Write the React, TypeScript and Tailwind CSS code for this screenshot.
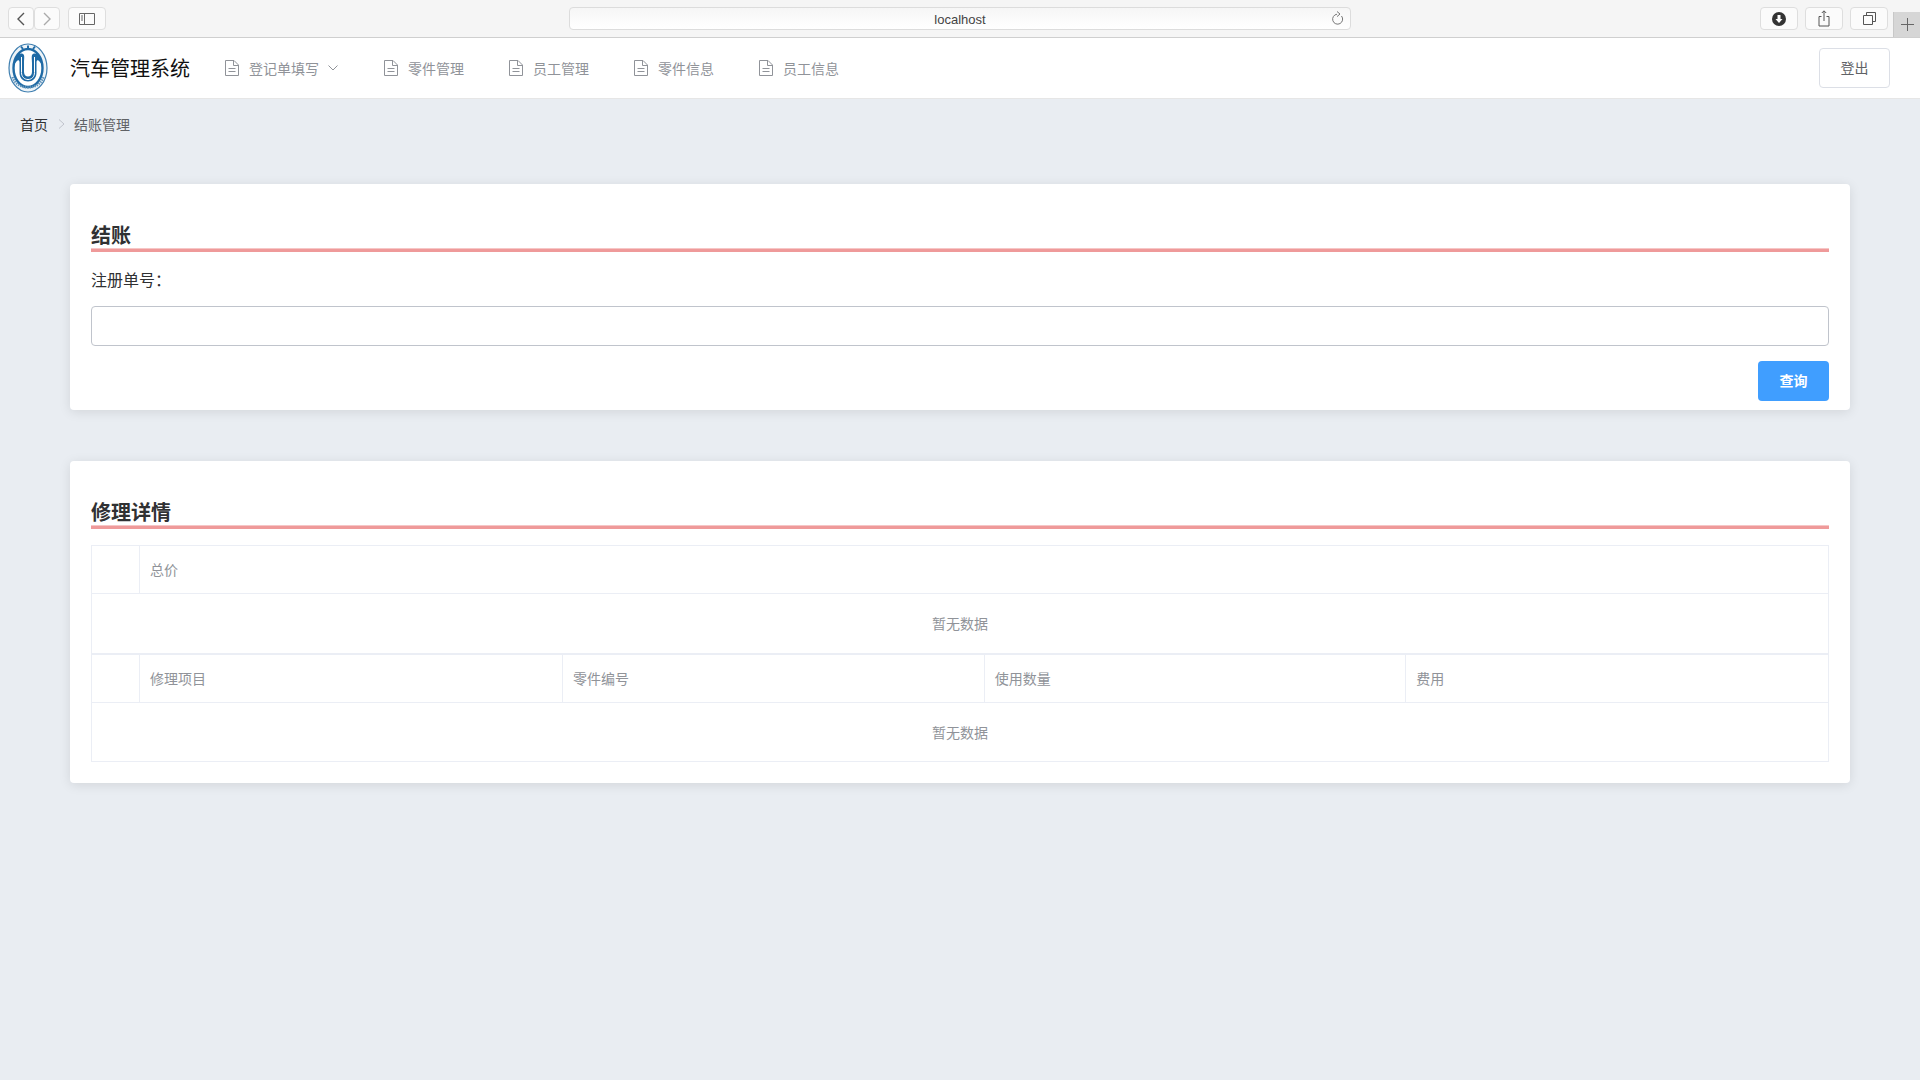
const font = { fontFamily: '"Noto Sans CJK SC", sans-serif' };

function DocIcon() {
  return (
    <svg className="w-[14px] h-[16px] shrink-0 text-[#909399]" viewBox="0 0 14 16" fill="none" stroke="currentColor" strokeWidth="1">
      <path d="M.5.5H9L13.5 5V15.5H.5Z" strokeLinejoin="round" />
      <path d="M8.5.5V5.5H13.5" />
      <path d="M3.5 8.5H10.5M3.5 11.5H10.5" />
    </svg>
  );
}

function ToolButton({ className, children }: { className: string; children?: React.ReactNode }) {
  return (
    <div className={`h-[23px] flex items-center justify-center rounded-[4px] border border-[#dedede] bg-[#fbfbfb] ${className}`}>
      {children}
    </div>
  );
}

function Toolbar() {
  return (
    <div className="h-[38px] shrink-0 flex bg-[#f5f5f5] border-b border-[#cfcfcf] pl-[8px]">
      <div className="flex pt-[7px]">
        <ToolButton className="w-[26px]">
          <svg width="12" height="14" viewBox="0 0 12 14" fill="none" stroke="#555" strokeWidth="1.4"><path d="M9 1L3 7L9 13" /></svg>
        </ToolButton>
        <ToolButton className="w-[26px]">
          <svg width="12" height="14" viewBox="0 0 12 14" fill="none" stroke="#aaa" strokeWidth="1.4"><path d="M3 1L9 7L3 13" /></svg>
        </ToolButton>
        <ToolButton className="w-[38px] ml-[8px]">
          <svg width="16" height="12" viewBox="0 0 16 12" fill="none" stroke="#666"><path d="M.5.5H15.5V11.5H.5ZM5.5.5V11.5M2 3H4M2 5H4M2 7H4" /></svg>
        </ToolButton>
      </div>
      <div className="ml-[463px] mt-[7px] w-[782px] h-[23px] pt-[2px] relative flex items-center justify-center rounded-[4px] border border-[#dcdcdc] bg-gradient-to-b from-[#f6f6f6] to-white text-[13px] text-[#444]" style={{ fontFamily: '"Liberation Sans", sans-serif' }}>
        localhost
        <svg className="absolute right-[5px] top-[3px]" width="13" height="15" viewBox="0 0 13 15" fill="none" stroke="#777"><path d="M9.5 5A5 5 0 1 1 5 3.2" /><path d="M5 .5L8 3L5 5.6" /></svg>
      </div>
      <div className="ml-[409px] flex pt-[7px] gap-[7px]">
        <ToolButton className="w-[38px]">
          <svg width="14" height="14" viewBox="0 0 14 14"><circle cx="7" cy="7" r="7" fill="#333" /><path d="M5.5 3H8.5V7H10.5L7 11L3.5 7H5.5Z" fill="#fff" /></svg>
        </ToolButton>
        <ToolButton className="w-[38px]">
          <svg width="12" height="17" viewBox="0 0 12 17" fill="none" stroke="#555"><path d="M3.5 6.5H1V16H11V6.5H8.5M6 11V1M3.8 3L6 .8L8.2 3" /></svg>
        </ToolButton>
        <ToolButton className="w-[38px]">
          <svg width="13" height="13" viewBox="0 0 13 13" fill="none" stroke="#555"><path d="M.5 3.5H9.5V12.5H.5ZM3.5 3.5V.5H12.5V9.5H9.5" /></svg>
        </ToolButton>
      </div>
      <div className="ml-[5px] w-[27px] mt-[12px] flex items-center justify-center bg-[#d6d6d6] border-l border-[#c8c8c8]">
        <svg width="13" height="13" viewBox="0 0 13 13" stroke="#666"><path d="M6.5 0V13M0 6.5H13" /></svg>
      </div>
    </div>
  );
}

function Logo() {
  return (
    <svg className="w-[40px] h-[50px] shrink-0" viewBox="0 0 40 50" fill="none">
      <ellipse cx="20" cy="25" rx="19" ry="24" fill="#eef4f8" stroke="#3f7fb0" strokeWidth="1.2" />
      <ellipse cx="20" cy="25" rx="14.5" ry="19" fill="#fff" stroke="#1f6aa5" strokeWidth="2.4" />
      <path d="M6 22C6 14 11 9 15 11C17 12 16 16 16 20V29C16 32 18 33.5 20 33.5C22 33.5 24 32 24 29V20C24 16 23 12 25 11C29 9 34 14 34 22C31 17 29 16 28.5 19V30C28.5 35 24.5 38.5 20 38.5C15.5 38.5 11.5 35 11.5 30V19C11 16 9 17 6 22Z" fill="#1f6aa5" />
      <path d="M13.5 14V29.5C13.5 34 16.5 36.5 20 36.5C23.5 36.5 26.5 34 26.5 29.5V14" stroke="#fff" strokeWidth="1" />
      <path d="M13 3.5L15 6M20 2.5V5.5M27 3.5L25 6" stroke="#1f6aa5" strokeWidth="2" />
      <path d="M4.5 34C9 48 31 48 35.5 34" stroke="#5f93ba" strokeWidth="2.4" strokeDasharray="1.4 1" />
    </svg>
  );
}

const navItems = ["零件管理", "员工管理", "零件信息", "员工信息"];

function Header() {
  return (
    <div className="h-[61px] shrink-0 flex items-center bg-white border-b border-[#e6e6e6] pl-[8px] pr-[30px]">
      <Logo />
      <div className="ml-[22px] w-[155px] text-[20px] text-[#111]">汽车管理系统</div>
      <div className="flex items-center text-[14px] text-[#909399]">
        <DocIcon />
        <span className="ml-[10px]">登记单填写</span>
        <svg className="ml-[9px]" width="10" height="6" viewBox="0 0 10 6" fill="none" stroke="#909399"><path d="M.5.5L5 5L9.5.5" /></svg>
      </div>
      <div className="ml-[46px] flex items-center gap-[45px] text-[14px] text-[#909399]">
        {navItems.map((item, i) => (
          <div key={i} className="flex items-center gap-[10px]">
            <DocIcon />
            <span>{item}</span>
          </div>
        ))}
      </div>
      <button className="ml-auto w-[71px] h-[40px] pb-[1px] rounded-[4px] border border-[#dcdfe6] bg-white text-[14px] text-[#606266]">登出</button>
    </div>
  );
}

function SectionTitle({ children }: { children: React.ReactNode }) {
  return (
    <div>
      <div className="text-[20px] leading-[28px] font-bold text-[#303133]">{children}</div>
      <div className="h-[3px] bg-[#ef9a9a] border-t border-[#f6c6c6] box-content mt-[-1px]" />
    </div>
  );
}

function EmptyRow({ last }: { last?: boolean }) {
  return (
    <div className={`flex items-center justify-center text-[14px] text-[#909399] ${last ? "h-[58px]" : "h-[61px] border-b-2 border-[#ebeef5]"}`}>
      暂无数据
    </div>
  );
}

function HeadCell({ children, last }: { children?: React.ReactNode; last?: boolean }) {
  return <div className={`pl-[10px] pb-[1px] flex items-center text-[14px] text-[#909399] ${last ? "" : "border-r border-[#ebeef5]"}`}>{children}</div>;
}

export default function App() {
  return (
    <div className="min-h-screen flex flex-col bg-[#e9edf2]" style={font}>
      <Toolbar />
      <Header />
      <div className="h-[44px] shrink-0 pl-[20px] pt-[6px] flex items-center text-[14px]">
        <span className="text-[#303133]">首页</span>
        <svg className="ml-[10px] mr-[9px]" width="7" height="10" viewBox="0 0 7 10" fill="none" stroke="#c0c4cc"><path d="M1 .5L6 5L1 9.5" /></svg>
        <span className="text-[#606266]">结账管理</span>
      </div>
      <div className="px-[70px] pt-[41px] flex flex-col gap-[51px]">
        <div className="bg-white rounded-[4px] shadow-[0_2px_12px_0_rgba(0,0,0,0.1)] px-[21px] pt-[37px] pb-[9px]">
          <SectionTitle>结账</SectionTitle>
          <div className="mt-[16px] text-[16px] leading-[22px] text-[#303133]">注册单号：</div>
          <div className="mt-[16px] h-[40px] rounded-[4px] border border-[#c0c4cc] bg-white" />
          <div className="mt-[15px] flex justify-end">
            <button className="w-[71px] h-[40px] pb-[2px] rounded-[4px] bg-[#409eff] text-[14px] font-bold text-white">查询</button>
          </div>
        </div>
        <div className="bg-white rounded-[4px] shadow-[0_2px_12px_0_rgba(0,0,0,0.1)] px-[21px] pt-[37px] pb-[21px]">
          <SectionTitle>修理详情</SectionTitle>
          <div className="mt-[16px] border border-[#ebeef5]">
            <div className="h-[48px] grid grid-cols-[48px_1fr] border-b border-[#ebeef5]">
              <HeadCell />
              <HeadCell last>总价</HeadCell>
            </div>
            <EmptyRow />
            <div className="h-[48px] grid grid-cols-[48px_423px_1fr_1fr_1fr] border-b border-[#ebeef5]">
              <HeadCell />
              <HeadCell>修理项目</HeadCell>
              <HeadCell>零件编号</HeadCell>
              <HeadCell>使用数量</HeadCell>
              <HeadCell last>费用</HeadCell>
            </div>
            <EmptyRow last />
          </div>
        </div>
      </div>
    </div>
  );
}
